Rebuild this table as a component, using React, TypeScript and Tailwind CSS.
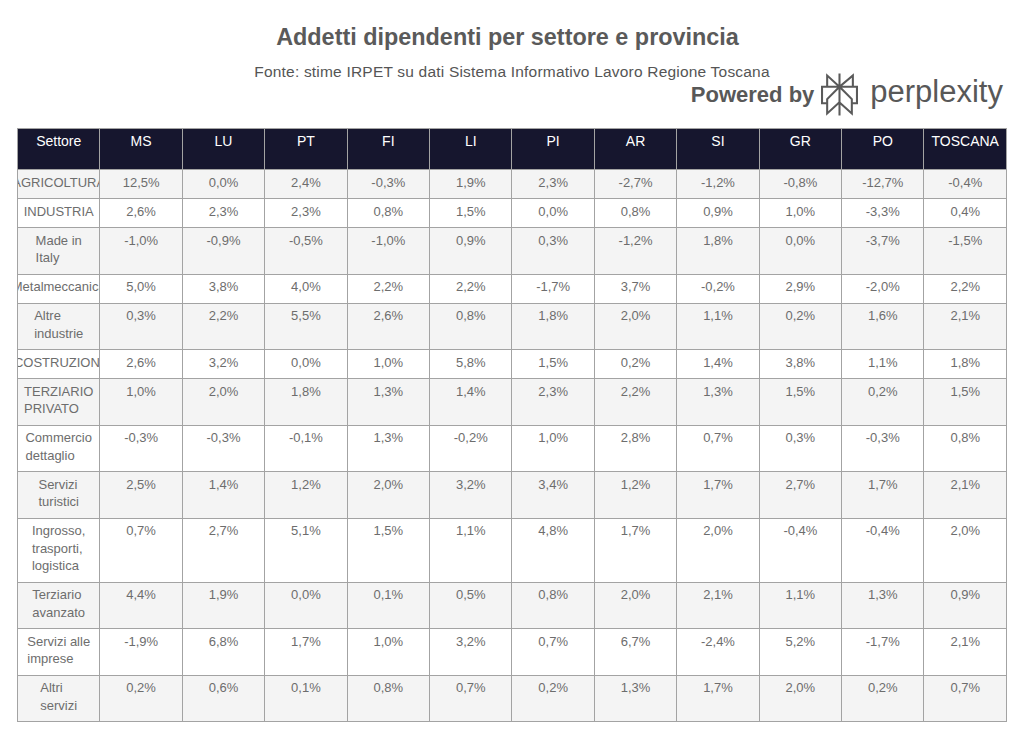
import React from "react";

type Row = { label: string[]; values: string[] };

const headers = ["Settore", "MS", "LU", "PT", "FI", "LI", "PI", "AR", "SI", "GR", "PO", "TOSCANA"];

const rows: Row[] = [
  { label: ["AGRICOLTURA"], values: ["12,5%", "0,0%", "2,4%", "-0,3%", "1,9%", "2,3%", "-2,7%", "-1,2%", "-0,8%", "-12,7%", "-0,4%"] },
  { label: ["INDUSTRIA"], values: ["2,6%", "2,3%", "2,3%", "0,8%", "1,5%", "0,0%", "0,8%", "0,9%", "1,0%", "-3,3%", "0,4%"] },
  { label: ["Made in", "Italy"], values: ["-1,0%", "-0,9%", "-0,5%", "-1,0%", "0,9%", "0,3%", "-1,2%", "1,8%", "0,0%", "-3,7%", "-1,5%"] },
  { label: ["Metalmeccanica"], values: ["5,0%", "3,8%", "4,0%", "2,2%", "2,2%", "-1,7%", "3,7%", "-0,2%", "2,9%", "-2,0%", "2,2%"] },
  { label: ["Altre", "industrie"], values: ["0,3%", "2,2%", "5,5%", "2,6%", "0,8%", "1,8%", "2,0%", "1,1%", "0,2%", "1,6%", "2,1%"] },
  { label: ["COSTRUZIONI"], values: ["2,6%", "3,2%", "0,0%", "1,0%", "5,8%", "1,5%", "0,2%", "1,4%", "3,8%", "1,1%", "1,8%"] },
  { label: ["TERZIARIO", "PRIVATO"], values: ["1,0%", "2,0%", "1,8%", "1,3%", "1,4%", "2,3%", "2,2%", "1,3%", "1,5%", "0,2%", "1,5%"] },
  { label: ["Commercio", "dettaglio"], values: ["-0,3%", "-0,3%", "-0,1%", "1,3%", "-0,2%", "1,0%", "2,8%", "0,7%", "0,3%", "-0,3%", "0,8%"] },
  { label: ["Servizi", "turistici"], values: ["2,5%", "1,4%", "1,2%", "2,0%", "3,2%", "3,4%", "1,2%", "1,7%", "2,7%", "1,7%", "2,1%"] },
  { label: ["Ingrosso,", "trasporti,", "logistica"], values: ["0,7%", "2,7%", "5,1%", "1,5%", "1,1%", "4,8%", "1,7%", "2,0%", "-0,4%", "-0,4%", "2,0%"] },
  { label: ["Terziario", "avanzato"], values: ["4,4%", "1,9%", "0,0%", "0,1%", "0,5%", "0,8%", "2,0%", "2,1%", "1,1%", "1,3%", "0,9%"] },
  { label: ["Servizi alle", "imprese"], values: ["-1,9%", "6,8%", "1,7%", "1,0%", "3,2%", "0,7%", "6,7%", "-2,4%", "5,2%", "-1,7%", "2,1%"] },
  { label: ["Altri", "servizi"], values: ["0,2%", "0,6%", "0,1%", "0,8%", "0,7%", "0,2%", "1,3%", "1,7%", "2,0%", "0,2%", "0,7%"] },
];

function PerplexityLogo() {
  return (
    <svg width="37" height="43" viewBox="1.6 0 20.8 24" fill="#5a5a5a" aria-hidden="true">
      <path d="M22.3977 7.0896h-2.3106V.0676l-7.5094 6.3542V.1577h-1.1554v6.1966L4.4904 0v7.0896H1.6023v10.3976h2.8882V24l6.932-6.3591v6.2005h1.1554v-6.0469l6.9318 6.1807v-6.4879h2.8882V7.0896zm-3.4657-4.531v4.531h-5.355l5.355-4.531zm-13.2862.0676 4.8691 4.4634H5.6458V2.6262zM2.7576 16.332V8.245h7.8476l-6.1149 6.1147v1.9723H2.7576zm2.8882 5.0404v-3.8852h.0001v-2.6488l5.7763-5.7764v7.0111l-5.7764 5.2993zm12.7086.0248-5.7766-5.1509V9.0618l5.7766 5.7766v6.5588zm2.8882-5.0652h-1.733v-1.9723L13.3948 8.245h7.8478v8.087z" />
    </svg>
  );
}

export default function App() {
  return (
    <div
      className="w-[1024px] h-[742px] bg-white overflow-hidden"
      style={{ fontFamily: '"Liberation Sans", Arial, sans-serif' }}
    >
      <div className="pt-[23px]">
        <h1 className="pr-[9px] text-center text-[23.4px] leading-[28px] font-bold text-[#5a5a5a]">
          Addetti dipendenti per settore e provincia
        </h1>
        <p className="mt-[12px] text-center text-[15.5px] leading-[18px] tracking-[0.2px] text-[#555555]">
          Fonte: stime IRPET su dati Sistema Informativo Lavoro Regione Toscana
        </p>
        <div className="-mt-[8px] flex h-[43px] items-center justify-end pr-[21px] text-[#585858]">
          <span className="text-[22px] leading-[26px] font-bold">Powered by</span>
          <span className="ml-[7px] flex">
            <PerplexityLogo />
          </span>
          <span className="ml-[12px] pb-[5px] text-[31px] leading-[36px] font-normal">perplexity</span>
        </div>
      </div>

      <table className="mx-auto mt-[12px] w-[990px] table-fixed border-collapse text-[13px] leading-[17.5px]">
        <thead>
          <tr className="bg-[#16162e]">
            {headers.map((h) => (
              <th
                key={h}
                className="border border-[#a3a3a3] px-[2px] pt-[4px] pb-[18.5px] align-top text-center text-[14px] font-normal text-white"
              >
                {h}
              </th>
            ))}
          </tr>
        </thead>
        <tbody>
          {rows.map((r, i) => (
            <tr key={r.label.join(" ")} className={i % 2 === 0 ? "bg-[#f4f4f4]" : "bg-white"}>
              <td className="overflow-hidden border border-[#a3a3a3] px-[2px] pt-[3.5px] pb-[7px] align-top text-[#6d6d6d]">
                <div className="flex justify-center">
                  <span className="whitespace-nowrap text-left">
                    {r.label.map((l, j) => (
                      <React.Fragment key={j}>
                        {j > 0 && <br />}
                        {l}
                      </React.Fragment>
                    ))}
                  </span>
                </div>
              </td>
              {r.values.map((v, j) => (
                <td
                  key={j}
                  className="border border-[#a3a3a3] px-[2px] pt-[3.5px] pb-[7px] align-top text-center text-[#6d6d6d]"
                >
                  {v}
                </td>
              ))}
            </tr>
          ))}
        </tbody>
      </table>
    </div>
  );
}
